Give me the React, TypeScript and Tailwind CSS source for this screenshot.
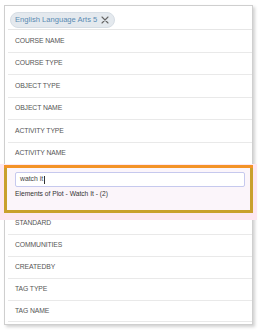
import React from "react";

const topRows = ["COURSE NAME", "COURSE TYPE", "OBJECT TYPE", "OBJECT NAME", "ACTIVITY TYPE", "ACTIVITY NAME"];
const bottomRows = ["STANDARD", "COMMUNITIES", "CREATEDBY", "TAG TYPE", "TAG NAME"];

function Row({ label, h }: { label: string; h: string }) {
  return (
    <div className={`${h} flex items-center border-b border-[#e9e9e9] pl-[7px] text-[6.8px] text-[#555555] tracking-[-0.1px]`}>
      {label}
    </div>
  );
}

export default function App() {
  return (
    <div className="w-[261px] h-[332px] bg-white pt-[5px] pl-[4px]" style={{ fontFamily: '"Liberation Sans", Arial, sans-serif' }}>
      <div className="w-[249px] h-[320px] border border-[#cfcfcf] bg-white shadow-[2px_2px_3px_rgba(0,0,0,0.18)] flex flex-col">
        <div className="h-[23px] flex items-start pl-[5px] pt-[6px]">
          <div className="h-[16px] flex items-center gap-[4px] rounded-full bg-[#e4e9ee] border border-[#d6dde4] pl-[4px] pr-[5px]">
            <span className="text-[7.6px] text-[#5a8bb3]">English Language Arts 5</span>
            <svg width="8" height="8" viewBox="0 0 8 8" className="text-[#666]">
              <path d="M1 1L7 7M7 1L1 7" stroke="currentColor" strokeWidth="1.1" strokeLinecap="round" />
            </svg>
          </div>
        </div>
        <div className="border-t border-[#e6e6e6] ml-[3px]">
          {topRows.map((r) => (
            <Row key={r} label={r} h="h-[22.5px]" />
          ))}
        </div>
        <div className="-mx-[1px] shadow-[0_3px_0_4px_#fde7f1] relative">
          <div className="h-[3px] bg-[#f39327]" />
          <div className="h-[45px] border-x-[3px] border-b-[3px] border-[#c9a02c] bg-[#fbf5fa] pl-[8px] pr-[5px] pt-[4px]">
            <div className="h-[15px] bg-white border border-[#c6c9ee] rounded-[2px] flex items-center pl-[4px] text-[6.8px] text-[#444]">
              watch it<span className="inline-block w-[0.6px] h-[8px] bg-[#333] ml-[1px]" />
            </div>
            <div className="mt-[2px] text-[6.7px] text-[#333] leading-[10px]">Elements of Plot - Watch It - (2)</div>
          </div>
        </div>
        <div className="ml-[3px]">
          {bottomRows.map((r, i) => (
            <Row key={r} label={r} h={i === bottomRows.length - 1 ? "h-[21px]" : "h-[22px]"} />
          ))}
        </div>
      </div>
    </div>
  );
}
